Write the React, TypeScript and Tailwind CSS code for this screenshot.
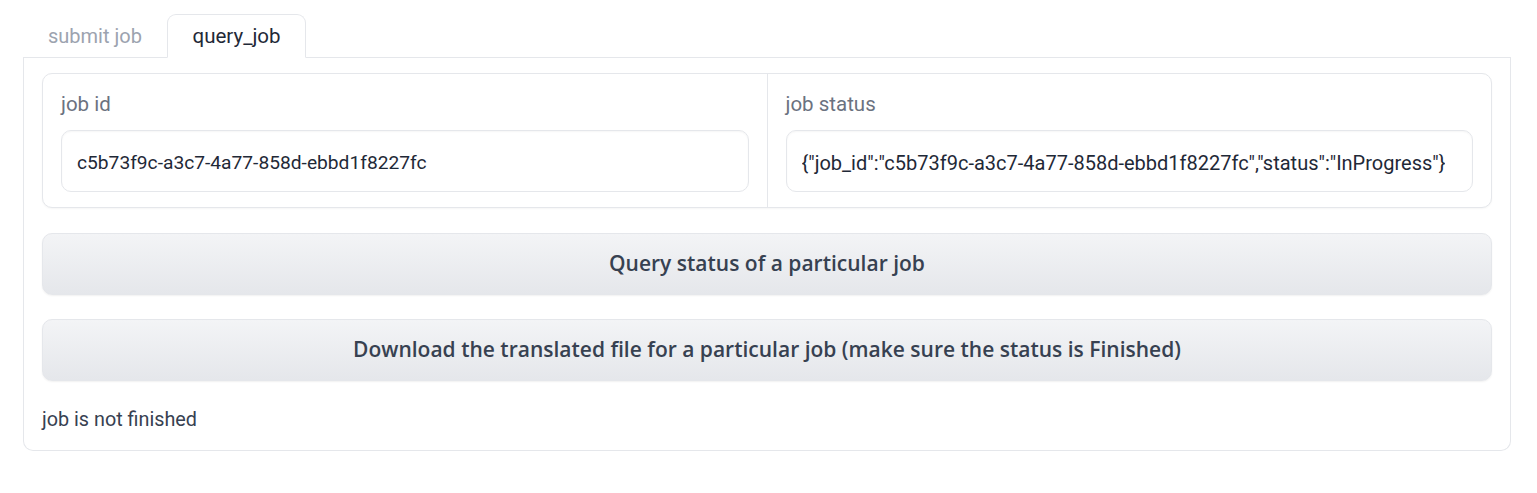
import React from "react";

const body = { fontFamily: "Roboto, 'Liberation Sans', sans-serif" };
const btnFont = { fontFamily: "'Open Sans', 'Liberation Sans', sans-serif" };

function Field({ label, value, first, size }: { label: string; value: string; first?: boolean; size: string }) {
  return (
    <div className={`flex-1 min-w-0 flex flex-col gap-[12px] px-[18px] pt-[16px] pb-[15px] ${first ? "" : "border-l border-[#e5e7eb]"}`}>
      <div className="text-[20.5px] leading-[28px] text-[#6b7280]">{label}</div>
      <div className="h-[62px] rounded-[10px] border border-[#e5e7eb] bg-white shadow-[inset_0_1px_2px_rgba(0,0,0,0.04)] px-[15px] pt-[3px] flex items-center">
        <span className={`${size} leading-[28px] text-[#1f2937] whitespace-nowrap overflow-hidden`}>{value}</span>
      </div>
    </div>
  );
}

function Btn({ children }: { children: React.ReactNode }) {
  return (
    <button
      className="h-[62px] w-full rounded-[10px] border border-[#e5e7eb] bg-gradient-to-b from-[#f3f4f6] to-[#e5e7eb] shadow-[0_1px_2px_rgba(0,0,0,0.06)] text-[21px] font-semibold text-[#374151] flex items-center justify-center"
      style={btnFont}
    >
      {children}
    </button>
  );
}

export default function App() {
  return (
    <div className="bg-white min-h-[493px] pl-[23px] pr-[26px] pt-[14px]" style={body}>
      <div className="flex border-b border-[#e5e7eb] h-[44px]">
        <div className="w-[144px] pl-[25px] flex items-center text-[20px] text-[#9ca3af]">submit job</div>
        <div className="w-[139px] flex items-center justify-center text-[20.5px] text-[#1f2937] bg-white border border-[#e5e7eb] border-b-white rounded-t-[9px] -mb-px h-[44px]">
          query_job
        </div>
      </div>
      <div className="border-x border-b border-[#e5e7eb] rounded-b-[10px] px-[18px] pt-[15px] pb-[16px] flex flex-col gap-[24px]">
        <div className="flex rounded-[10px] border border-[#e5e7eb] shadow-[0_1px_2px_rgba(0,0,0,0.04)] bg-white mb-px">
          <Field first size="text-[19.2px]" label="job id" value="c5b73f9c-a3c7-4a77-858d-ebbd1f8227fc" />
          <Field size="text-[20px]" label="job status" value={'{"job_id":"c5b73f9c-a3c7-4a77-858d-ebbd1f8227fc","status":"InProgress"}'} />
        </div>
        <Btn>Query status of a particular job</Btn>
        <Btn>Download the translated file for a particular job (make sure the status is Finished)</Btn>
        <div className="text-[19.8px] leading-[28px] text-[#374151] mt-px">job is not finished</div>
      </div>
    </div>
  );
}
